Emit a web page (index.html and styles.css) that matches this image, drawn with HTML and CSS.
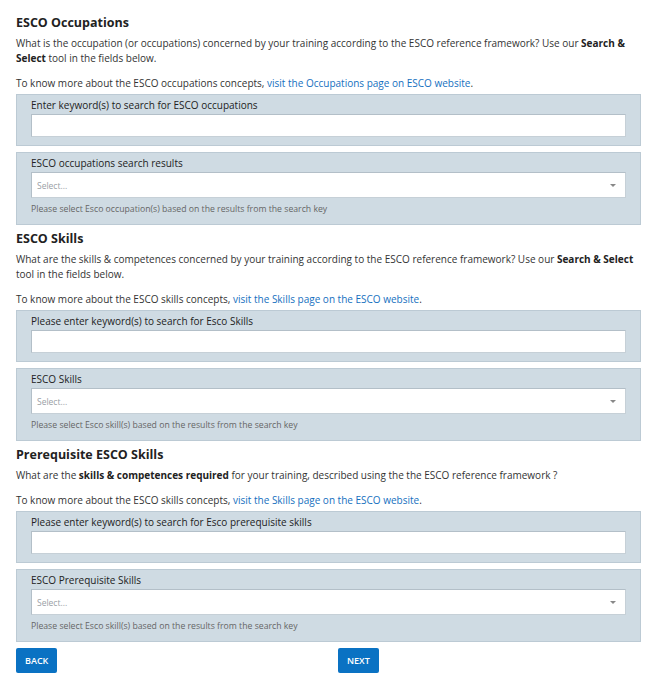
FILE: index.html
```html
<!DOCTYPE html>
<html lang="en">
<head>
<meta charset="utf-8">
<title>ESCO</title>
<link rel="stylesheet" href="styles.css">
</head>
<body>
<main class="page">
  <section class="section">
    <h2 class="title">ESCO Occupations</h2>
    <p class="desc">What is the occupation (or occupations) concerned by your training according to the ESCO reference framework? Use our <b>Search &amp; Select</b> tool in the fields below.</p>
    <p class="more">To know more about the ESCO occupations concepts, <a href="#">visit the Occupations page on ESCO website</a>.</p>
    <div class="panel">
      <label class="label">Enter keyword(s) to search for ESCO occupations</label>
      <div class="input"></div>
    </div>
    <div class="panel">
      <label class="label">ESCO occupations search results</label>
      <div class="select"><span class="ph">Select...</span><span class="caret"></span></div>
      <div class="help">Please select Esco occupation(s) based on the results from the search key</div>
    </div>
  </section>

  <section class="section">
    <h2 class="title">ESCO Skills</h2>
    <p class="desc">What are the skills &amp; competences concerned by your training according to the ESCO reference framework? Use our <b>Search &amp; Select</b> tool in the fields below.</p>
    <p class="more">To know more about the ESCO skills concepts, <a href="#">visit the Skills page on the ESCO website</a>.</p>
    <div class="panel">
      <label class="label">Please enter keyword(s) to search for Esco Skills</label>
      <div class="input"></div>
    </div>
    <div class="panel">
      <label class="label">ESCO Skills</label>
      <div class="select"><span class="ph">Select...</span><span class="caret"></span></div>
      <div class="help">Please select Esco skill(s) based on the results from the search key</div>
    </div>
  </section>

  <section class="section">
    <h2 class="title">Prerequisite ESCO Skills</h2>
    <p class="desc">What are the <b>skills &amp; competences required</b> for your training, described using the the ESCO reference framework ?</p>
    <p class="more">To know more about the ESCO skills concepts, <a href="#">visit the Skills page on the ESCO website</a>.</p>
    <div class="panel">
      <label class="label">Please enter keyword(s) to search for Esco prerequisite skills</label>
      <div class="input"></div>
    </div>
    <div class="panel">
      <label class="label">ESCO Prerequisite Skills</label>
      <div class="select"><span class="ph">Select...</span><span class="caret"></span></div>
      <div class="help">Please select Esco skill(s) based on the results from the search key</div>
    </div>
  </section>

  <div class="actions">
    <div><button class="btn">BACK</button></div>
    <div><button class="btn">NEXT</button></div>
  </div>
</main>
</body>
</html>
```

FILE: styles.css
```css
* { box-sizing: border-box; }
html, body { margin: 0; padding: 0; background: #fff; }
body {
  font-family: "Open Sans", "Liberation Sans", sans-serif;
  color: #333;
  font-size: 10px;
}
.page {
  width: 625px;
  margin-left: 16px;
  padding-top: 14px;
}
.section + .section { margin-top: 5px; }
.title {
  margin: 0;
  font-size: 12.5px;
  line-height: 18px;
  font-weight: 700;
  color: #222;
}
.desc {
  margin: 4px 0 0;
  line-height: 15px;
}
.desc b { font-weight: 700; color: #222; }
.more {
  margin: 10px 0 0;
  line-height: 15px;
}
.more a { color: #1570c0; text-decoration: none; }
.panel {
  margin-top: 3px;
  background: #cfdbe3;
  border: 1px solid #bccad4;
  padding: 3px 14px 8px;
}
.panel + .panel { margin-top: 6px; }
.label {
  display: block;
  line-height: 14px;
  margin-bottom: 2px;
  color: #222;
}
.input {
  height: 23px;
  background: #fff;
  border: 1px solid #b3bfc8;
  border-right-color: #c6d0d7;
  border-bottom-color: #c6d0d7;
}
.select {
  height: 26px;
  margin-top: 1px;
  background: #fff;
  border: 1px solid #b3bfc8;
  border-right-color: #c6d0d7;
  border-bottom-color: #c6d0d7;
  display: flex;
  align-items: center;
  justify-content: space-between;
  padding: 0 9px 0 5px;
}
.ph { color: #9aa0a6; font-size: 8.5px; }
.caret {
  width: 0; height: 0;
  border-left: 3px solid transparent;
  border-right: 3px solid transparent;
  border-top: 3px solid #888;
}
.help {
  margin-top: 5px;
  line-height: 13px;
  font-size: 8.7px;
  color: #666;
}
.actions {
  display: grid;
  grid-template-columns: 322px 1fr;
  margin-top: 6px;
}
.btn {
  font-family: "Open Sans", "Liberation Sans", sans-serif;
  font-size: 9px;
  font-weight: 600;
  color: #fff;
  background: #0a72c3;
  border: 0;
  border-radius: 2px;
  height: 25px;
  padding: 0 9px;
  cursor: pointer;
}
```
